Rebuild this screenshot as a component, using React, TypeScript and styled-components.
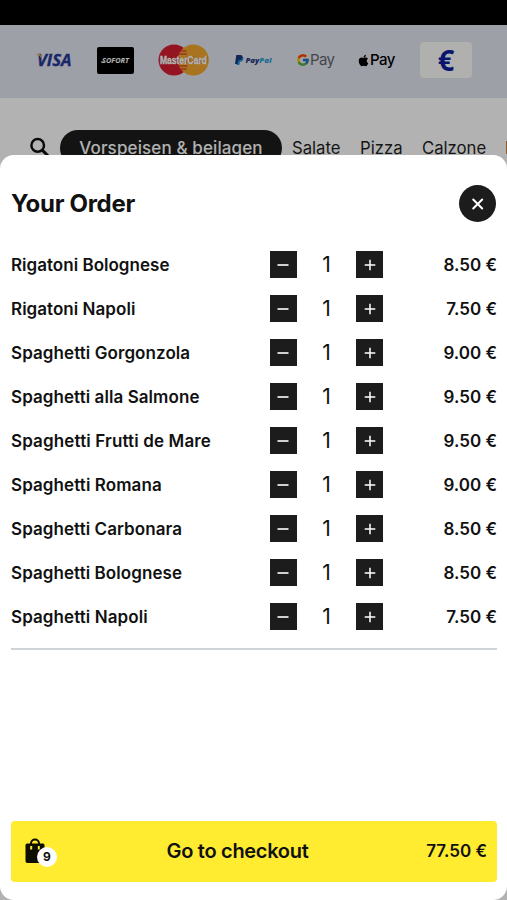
import React from "react";
import styled, { createGlobalStyle } from "styled-components";
import { FaApple } from "react-icons/fa";
import { FcGoogle } from "react-icons/fc";

const GlobalStyle = createGlobalStyle`
  * { box-sizing: border-box; }
  body { margin: 0; background: #fff; font-family: Inter, "Liberation Sans", sans-serif; color: #111; overflow: hidden; }
  button { font: inherit; color: inherit; border: 0; padding: 0; margin: 0; }
  svg { display: block; flex: none; overflow: visible; }
`;

const Screen = styled.div`
  position: relative;
  height: 900px;
  overflow: hidden;
  background: #fff;
`;

const StatusBar = styled.div`
  height: 25px;
  background: #000;
`;

const PaymentBar = styled.div`
  height: 73px;
  padding: 0 35px 3px 36px;
  display: flex;
  align-items: center;
  background: #e3e6f1;
`;

const Logo = styled.div<{ $width: number; $gap: number }>`
  width: ${(p) => p.$width}px;
  margin-right: ${(p) => p.$gap}px;
  flex: none;
  display: flex;
  align-items: center;
`;

const PayWord = styled.span<{ $tone: string; $weight: number; $spacing: number }>`
  font-size: 15px;
  line-height: 18px;
  margin-top: -1px;
  font-weight: ${(p) => p.$weight};
  letter-spacing: ${(p) => p.$spacing}px;
  color: ${(p) => p.$tone};
`;

const CashCard = styled.div`
  width: 52px;
  height: 36px;
  margin-left: 1px;
  border-radius: 4px;
  background: #fcfcfa;
  display: flex;
  align-items: center;
  justify-content: center;
  font: 700 29px/36px "Open Sans", sans-serif;
  color: #0b1fa0;
`;

const Categories = styled.nav`
  display: flex;
  align-items: center;
  padding: 32px 0 0 28px;
  white-space: nowrap;
  font-size: 16.7px;
  line-height: 36px;
  color: #1f1f1f;
`;

const ActiveCategory = styled.span`
  width: 222px;
  height: 36px;
  margin: 0 10px 0 9px;
  flex: none;
  border-radius: 18px;
  text-align: center;
  font-size: 17px;
  font-weight: 500;
  letter-spacing: 0.12px;
  background: #1c1c1c;
  color: #fff;
`;

const Category = styled.span<{ $width: number }>`
  width: ${(p) => p.$width}px;
  flex: none;
`;

const Scrim = styled.div`
  position: absolute;
  inset: 0;
  background: rgba(0, 0, 0, 0.3);
`;

const Sheet = styled.section`
  position: absolute;
  inset: 154.5px 0 0 0;
  padding: 30.5px 10px 18.5px 11px;
  border-radius: 14px;
  background: #fff;
  display: flex;
  flex-direction: column;
`;

const SheetHeader = styled.header`
  height: 37px;
  padding-right: 1px;
  display: flex;
  align-items: center;
  justify-content: space-between;
`;

const Title = styled.h1`
  margin: 0;
  font-size: 24px;
  line-height: 37px;
  font-weight: 650;
  letter-spacing: -0.3px;
`;

const CloseButton = styled.button`
  width: 37px;
  height: 37px;
  border-radius: 50%;
  background: #1c1c1c;
  display: flex;
  align-items: center;
  justify-content: center;
`;

const Items = styled.ul`
  list-style: none;
  margin: 0;
  padding: 20.5px 0 9.5px;
  border-bottom: 2px solid #d0d4d6;
`;

const Item = styled.li`
  height: 44px;
  display: grid;
  grid-template-columns: 258.5px 114px 1fr;
  align-items: center;
  font-size: 17px;
  font-weight: 600;
`;

const Name = styled.span<{ $spacing: number }>`
  white-space: nowrap;
  letter-spacing: ${(p) => p.$spacing}px;
`;

const Stepper = styled.div`
  display: flex;
  align-items: center;
  justify-content: space-between;
`;

const StepButton = styled.button`
  width: 27px;
  height: 27px;
  background: #1c1c1c;
  display: flex;
  align-items: center;
  justify-content: center;
`;

const Quantity = styled.span`
  font-size: 21px;
  line-height: 27px;
  font-weight: 400;
`;

const Price = styled.span`
  text-align: right;
`;

const CheckoutButton = styled.button`
  height: 61px;
  margin-top: auto;
  padding: 0 10px 0 13px;
  border-radius: 4px;
  background: #ffec30;
  display: grid;
  grid-template-columns: 54px 1fr 90px;
  align-items: center;
  font-size: 17px;
  font-weight: 600;
`;

const BagBox = styled.span`
  position: relative;
  width: 34px;
  height: 27px;
`;

const Badge = styled.span`
  position: absolute;
  left: 13px;
  top: 9.5px;
  width: 20px;
  height: 20px;
  border-radius: 50%;
  background: #fff;
  font-size: 12px;
  line-height: 20px;
  font-weight: 700;
  text-align: center;
`;

const CheckoutLabel = styled.span`
  font-size: 20px;
  font-weight: 630;
  letter-spacing: -0.3px;
  text-align: center;
`;

const VisaLogo = () => (
  <svg width="37" height="14" viewBox="0 0 37 14">
    <text x="1" y="12.5" fontFamily="Open Sans" fontSize="15.5" fontWeight="700" fontStyle="italic" fill="#263795" stroke="#263795" strokeWidth="0.3" textLength="34.5" lengthAdjust="spacingAndGlyphs">VISA</text>
    <path d="M0 1h4.3l1.8 6C4.7 3.8 2.8 1.8 0 1.3z" fill="#e9a83c" />
  </svg>
);

const SofortLogo = () => (
  <svg width="37" height="27" viewBox="0 0 37 27">
    <rect width="37" height="27" rx="2" fill="#000" />
    <text x="5" y="15.7" fontFamily="Open Sans" fontSize="7.2" fontWeight="700" fontStyle="italic" fill="#fff" textLength="27" lengthAdjust="spacingAndGlyphs">SOFORT</text>
    <path d="M4 15h3" stroke="#fff" strokeWidth="1" />
  </svg>
);

const MasterCardLogo = () => (
  <svg width="52" height="32" viewBox="0 0 52 32">
    <circle cx="16" cy="16" r="15.5" fill="#d51f30" />
    <circle cx="35.3" cy="16" r="15.5" fill="#f2a72e" />
    <path d="M22.5 7h6M21 10h8M20.4 22h9M22.5 25h6" stroke="#d51f30" strokeWidth="1.2" />
    <text x="2.6" y="20.4" fontFamily="Liberation Sans" fontSize="10.5" fontWeight="700" fill="#8f2818" textLength="47" lengthAdjust="spacingAndGlyphs">MasterCard</text>
    <text x="2" y="19.8" fontFamily="Liberation Sans" fontSize="10.5" fontWeight="700" fill="#fff" stroke="#fff" strokeWidth="0.4" textLength="47" lengthAdjust="spacingAndGlyphs">MasterCard</text>
  </svg>
);

const PayPalLogo = () => (
  <svg width="37" height="12" viewBox="0 0 37 12">
    <path d="M2.500 2.500h4c2 0 2.300 1.700 1.700 3.300-.5 1.500-1.700 2-3.200 2l-.7 3.200H1.500z" fill="#249bd3" />
    <path d="M1.300 1h3.900c2 0 2.700 1.300 2.200 3C6.900 5.800 5.500 6.300 3.400 6.300L2.500 10H0z" fill="#17367f" />
    <text x="10.500" y="8.600" fontFamily="Open Sans" fontSize="7.3" fontWeight="800" fontStyle="italic" fill="#243c82" textLength="26" lengthAdjust="spacingAndGlyphs">
      Pay<tspan fill="#289bd3">Pal</tspan>
    </text>
  </svg>
);

const SearchIcon = () => (
  <svg width="23" height="23" viewBox="0 0 23 23" fill="none" stroke="#111" strokeWidth="2.5">
    <circle cx="9.7" cy="8.4" r="6.3" />
    <path d="M14.3 13.1l5.6 5.6" strokeWidth="3" />
  </svg>
);

const BagIcon = () => (
  <svg width="22" height="27" viewBox="0 0 22 27">
    <path d="M7 7V5.500a4 4 0 0 1 8 0V7" fill="none" stroke="#0d0d00" strokeWidth="2" />
    <path d="M3 5.500h16q1.500 0 1.500 1.500v16q0 2-2 2h-15q-2 0-2-2v-16Q1.500 5.500 3 5.500z" fill="#0d0d00" />
    <path d="M7.200 8v3.500M14.800 8v3.500" stroke="#ffec30" strokeWidth="2" />
  </svg>
);

const items = [
  { name: "Rigatoni Bolognese", price: "8.50 €", spacing: 0.02 },
  { name: "Rigatoni Napoli", price: "7.50 €", spacing: 0.04 },
  { name: "Spaghetti Gorgonzola", price: "9.00 €", spacing: 0.08 },
  { name: "Spaghetti alla Salmone", price: "9.50 €", spacing: 0.07 },
  { name: "Spaghetti Frutti de Mare", price: "9.50 €", spacing: 0.14 },
  { name: "Spaghetti Romana", price: "9.00 €", spacing: 0.09 },
  { name: "Spaghetti Carbonara", price: "8.50 €", spacing: 0.07 },
  { name: "Spaghetti Bolognese", price: "8.50 €", spacing: 0.07 },
  { name: "Spaghetti Napoli", price: "7.50 €", spacing: 0.08 },
];

export default function App() {
  return (
    <Screen>
      <GlobalStyle />
      <StatusBar />
      <PaymentBar>
        <Logo $width={37} $gap={24}><VisaLogo /></Logo>
        <Logo $width={37} $gap={24}><SofortLogo /></Logo>
        <Logo $width={52} $gap={25}><MasterCardLogo /></Logo>
        <Logo $width={37} $gap={24}><PayPalLogo /></Logo>
        <Logo $width={38} $gap={23}>
          <FcGoogle size={14} />
          <PayWord $tone="#62666b" $weight={400} $spacing={-0.6}>Pay</PayWord>
        </Logo>
        <Logo $width={38} $gap={24}>
          <FaApple size={13} color="#000" />
          <PayWord $tone="#000" $weight={500} $spacing={-0.6}>Pay</PayWord>
        </Logo>
        <CashCard>€</CashCard>
      </PaymentBar>
      <Categories>
        <SearchIcon />
        <ActiveCategory>Vorspeisen &amp; beilagen</ActiveCategory>
        <Category $width={68}>Salate</Category>
        <Category $width={62}>Pizza</Category>
        <Category $width={83}>Calzone</Category>
        <Category $width={60}>Nudeln</Category>
      </Categories>
      <Scrim />
      <Sheet>
        <SheetHeader>
          <Title>Your Order</Title>
          <CloseButton aria-label="Close">
            <svg width="12" height="12" viewBox="0 0 12 12" stroke="#fff" strokeWidth="2" strokeLinecap="round">
              <path d="M1.200 1.500l9 9M10.200 1.500l-9 9" />
            </svg>
          </CloseButton>
        </SheetHeader>
        <Items>
          {items.map((item) => (
            <Item key={item.name}>
              <Name $spacing={item.spacing}>{item.name}</Name>
              <Stepper>
                <StepButton aria-label="Remove one">
                  <svg width="12" height="12" viewBox="0 0 12 12" stroke="#fff" strokeWidth="1.600"><path d="M0.500 6h11" /></svg>
                </StepButton>
                <Quantity>1</Quantity>
                <StepButton aria-label="Add one">
                  <svg width="12" height="12" viewBox="0 0 12 12" stroke="#fff" strokeWidth="1.500"><path d="M0.700 6h10.600M6 0.700v10.600" /></svg>
                </StepButton>
              </Stepper>
              <Price>{item.price}</Price>
            </Item>
          ))}
        </Items>
        <CheckoutButton>
          <BagBox><BagIcon /><Badge>9</Badge></BagBox>
          <CheckoutLabel>Go to checkout</CheckoutLabel>
          <Price>77.50 €</Price>
        </CheckoutButton>
      </Sheet>
    </Screen>
  );
}
